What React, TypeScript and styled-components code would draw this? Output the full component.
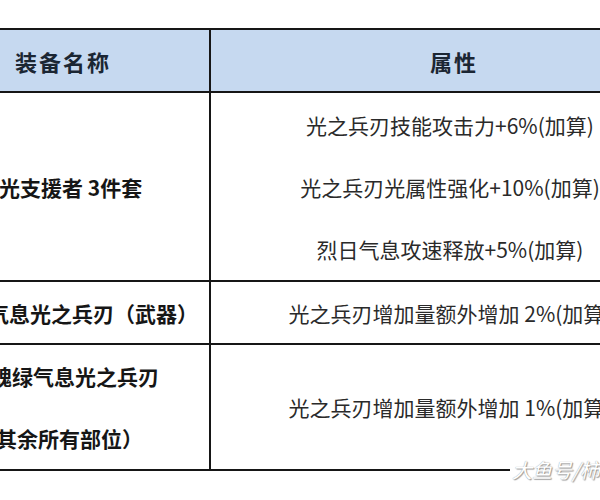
import { FunctionComponent } from "react";
import styled, { createGlobalStyle } from "styled-components";

const GlobalStyle = createGlobalStyle`
  html, body {
    margin: 0;
    padding: 0;
    background: #ffffff;
  }
  body {
    font-family: "Noto Sans CJK SC", "Noto Sans", sans-serif;
  }
`;

const Page = styled.div`
  position: relative;
  width: 600px;
  height: 500px;
  overflow: hidden;
  padding-top: 28px;
  box-sizing: border-box;
  background: #ffffff;
`;

const Table = styled.div`
  display: flex;
  flex-direction: column;
  width: 689px;
  border-top: 2px solid #161616;
`;

const Row = styled.div<{ $height: number; $head?: boolean }>`
  display: grid;
  grid-template-columns: 211px 478px;
  height: ${(p) => p.$height}px;
  border-bottom: 2px solid #161616;
  background: ${(p) => (p.$head ? "#c6d9f0" : "#ffffff")};
`;

const NameCell = styled.div<{ $head?: boolean }>`
  display: flex;
  flex-direction: column;
  justify-content: center;
  align-items: ${(p) => (p.$head ? "flex-start" : "stretch")};
  border-right: 2px solid #161616;
  overflow: hidden;
  padding-left: ${(p) => (p.$head ? "15px" : "0")};
`;

const AttrCell = styled.div<{ $head?: boolean }>`
  display: flex;
  flex-direction: column;
  justify-content: center;
  align-items: center;
  padding-left: ${(p) => (p.$head ? "8px" : "0")};
`;

const HeadText = styled.div`
  font-size: 22px;
  font-weight: 700;
  color: #1b2633;
  letter-spacing: 2px;
  line-height: 60px;
`;

const NameLine = styled.div<{ $shift: number }>`
  font-size: 21px;
  font-weight: 700;
  color: #161616;
  line-height: 62px;
  white-space: nowrap;
  margin-left: ${(p) => p.$shift}px;
`;

const AttrLine = styled.div`
  font-size: 21px;
  font-weight: 400;
  color: #2a2a2a;
  line-height: 62px;
  white-space: nowrap;
`;

const Watermark = styled.div`
  position: absolute;
  left: 510px;
  top: 455px;
  font-size: 20px;
  font-style: italic;
  color: #ffffff;
  white-space: nowrap;
  text-shadow: 0 0 1px #8a8a8a, 1px 1px 1px #9a9a9a;
  background: #ffffff;
  padding: 0 2px;
`;

type Item = {
  name: { text: string; shift: number }[];
  attrs: string[];
  height: number;
};

const items: Item[] = [
  {
    name: [{ text: "光支援者 3件套", shift: -1 }],
    attrs: [
      "光之兵刃技能攻击力+6%(加算)",
      "光之兵刃光属性强化+10%(加算)",
      "烈日气息攻速释放+5%(加算)",
    ],
    height: 187,
  },
  {
    name: [{ text: "气息光之兵刃（武器）", shift: -12 }],
    attrs: ["光之兵刃增加量额外增加 2%(加算)"],
    height: 61,
  },
  {
    name: [
      { text: "魂绿气息光之兵刃", shift: -9 },
      { text: "其余所有部位）", shift: -4 },
    ],
    attrs: ["光之兵刃增加量额外增加 1%(加算)"],
    height: 124,
  },
];

const App: FunctionComponent = () => (
  <>
    <GlobalStyle />
    <Page>
      <Table>
        <Row $height={61} $head>
          <NameCell $head>
            <HeadText>装备名称</HeadText>
          </NameCell>
          <AttrCell $head>
            <HeadText>属性</HeadText>
          </AttrCell>
        </Row>
        {items.map((item, i) => (
          <Row key={i} $height={item.height}>
            <NameCell>
              {item.name.map((line) => (
                <NameLine key={line.text} $shift={line.shift}>
                  {line.text}
                </NameLine>
              ))}
            </NameCell>
            <AttrCell>
              {item.attrs.map((a) => (
                <AttrLine key={a}>{a}</AttrLine>
              ))}
            </AttrCell>
          </Row>
        ))}
      </Table>
      <Watermark>大鱼号/柿</Watermark>
    </Page>
  </>
);

export default App;
